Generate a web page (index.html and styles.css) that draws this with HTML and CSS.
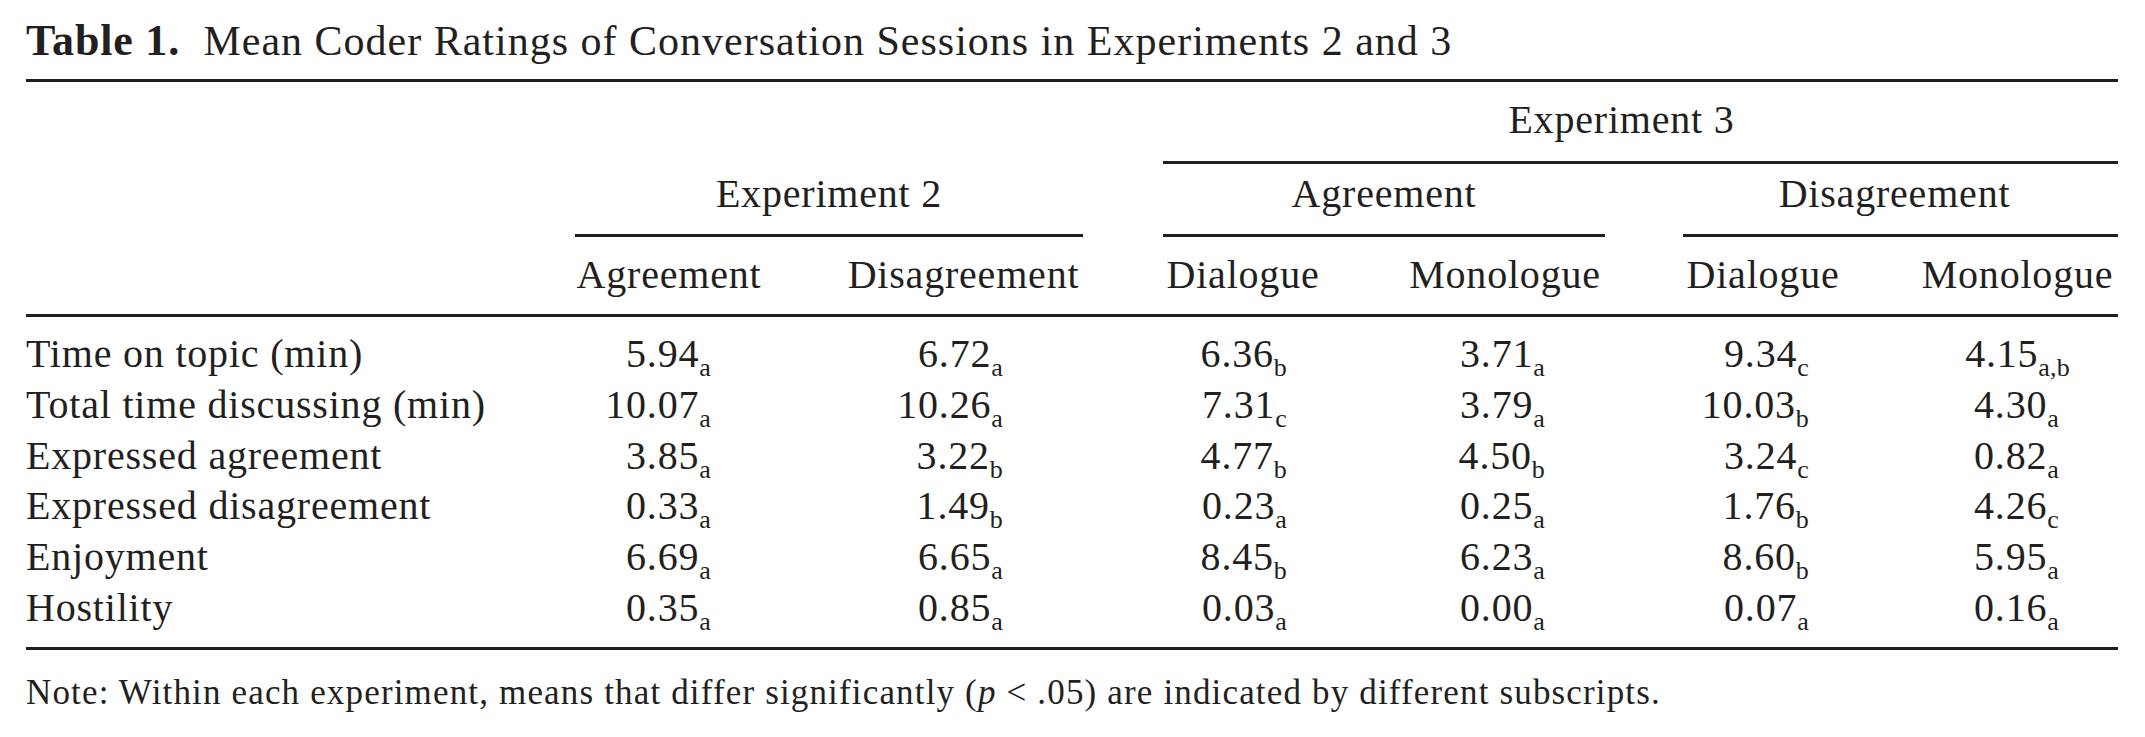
FILE: index.html
```html
<!DOCTYPE html>
<html lang="en">
<head>
<meta charset="utf-8">
<title>Table 1. Mean Coder Ratings of Conversation Sessions</title>
<link rel="stylesheet" href="styles.css">
</head>
<body>
<main class="page">
  <h1 class="caption"><b>Table 1.</b> Mean Coder Ratings of Conversation Sessions in Experiments 2 and 3</h1>
  <div class="table">
    <div class="thead">
      <div class="tr head-a">
        <div class="span-exp3">Experiment 3</div>
      </div>
      <div class="tr head-b">
        <div class="group g-exp2">Experiment 2</div>
        <div class="group g-agr">Agreement</div>
        <div class="group g-dis">Disagreement</div>
      </div>
      <div class="tr head-c">
        <div class="colhead c1">Agreement</div>
        <div class="colhead c2">Disagreement</div>
        <div class="colhead c3">Dialogue</div>
        <div class="colhead c4">Monologue</div>
        <div class="colhead c5">Dialogue</div>
        <div class="colhead c6">Monologue</div>
      </div>
    </div>
    <div class="tbody">
      <div class="tr row">
        <div class="lab">Time on topic (min)</div>
        <div class="val c1">5.94<sub>a</sub></div>
        <div class="val c2">6.72<sub>a</sub></div>
        <div class="val c3">6.36<sub>b</sub></div>
        <div class="val c4">3.71<sub>a</sub></div>
        <div class="val c5">9.34<sub>c</sub></div>
        <div class="val c6 wide">4.15<sub>a,b</sub></div>
      </div>
      <div class="tr row">
        <div class="lab">Total time discussing (min)</div>
        <div class="val c1">10.07<sub>a</sub></div>
        <div class="val c2">10.26<sub>a</sub></div>
        <div class="val c3">7.31<sub>c</sub></div>
        <div class="val c4">3.79<sub>a</sub></div>
        <div class="val c5">10.03<sub>b</sub></div>
        <div class="val c6">4.30<sub>a</sub></div>
      </div>
      <div class="tr row">
        <div class="lab">Expressed agreement</div>
        <div class="val c1">3.85<sub>a</sub></div>
        <div class="val c2">3.22<sub>b</sub></div>
        <div class="val c3">4.77<sub>b</sub></div>
        <div class="val c4">4.50<sub>b</sub></div>
        <div class="val c5">3.24<sub>c</sub></div>
        <div class="val c6">0.82<sub>a</sub></div>
      </div>
      <div class="tr row">
        <div class="lab">Expressed disagreement</div>
        <div class="val c1">0.33<sub>a</sub></div>
        <div class="val c2">1.49<sub>b</sub></div>
        <div class="val c3">0.23<sub>a</sub></div>
        <div class="val c4">0.25<sub>a</sub></div>
        <div class="val c5">1.76<sub>b</sub></div>
        <div class="val c6">4.26<sub>c</sub></div>
      </div>
      <div class="tr row">
        <div class="lab">Enjoyment</div>
        <div class="val c1">6.69<sub>a</sub></div>
        <div class="val c2">6.65<sub>a</sub></div>
        <div class="val c3">8.45<sub>b</sub></div>
        <div class="val c4">6.23<sub>a</sub></div>
        <div class="val c5">8.60<sub>b</sub></div>
        <div class="val c6">5.95<sub>a</sub></div>
      </div>
      <div class="tr row">
        <div class="lab">Hostility</div>
        <div class="val c1">0.35<sub>a</sub></div>
        <div class="val c2">0.85<sub>a</sub></div>
        <div class="val c3">0.03<sub>a</sub></div>
        <div class="val c4">0.00<sub>a</sub></div>
        <div class="val c5">0.07<sub>a</sub></div>
        <div class="val c6">0.16<sub>a</sub></div>
      </div>
    </div>
  </div>
  <p class="note">Note: Within each experiment, means that differ significantly (<i>p</i> &lt; .05) are indicated by different subscripts.</p>
</main>
</body>
</html>
```
FILE: styles.css
```css
* { box-sizing: border-box; }
html, body { margin: 0; padding: 0; background: #ffffff; }
body {
  font-family: "Liberation Serif", "Times New Roman", serif;
  color: #231f20;
}
.page {
  width: 2145px;
  padding: 16px 27px 0 26px;
}
.caption {
  margin: 0;
  font-size: 42px;
  line-height: 50px;
  font-weight: normal;
  letter-spacing: 1px;
  white-space: nowrap;
}
.caption b { font-size: 44px; font-weight: bold; margin-right: 12px; letter-spacing: 0.8px; }

.table {
  margin-top: 13px;
  width: 2092px;
  border-top: 3px solid #231f20;
  font-size: 40px;
  letter-spacing: 0.8px;
}
.tr {
  display: grid;
  grid-template-columns: 549px 188px 81px 239px 80px 160px 82px 200px 78px 160px 74px 201px;
}

/* header rows */
.span-exp3 {
  grid-column: 6 / 13;
  text-align: center;
  line-height: 48px;
  padding: 14px 38px 17px 0;
  border-bottom: 3px solid #231f20;
}
.group {
  text-align: center;
  line-height: 48px;
  padding: 6px 0 16px;
  border-bottom: 3px solid #231f20;
}
.g-exp2 { grid-column: 2 / 5; }
.g-agr { grid-column: 6 / 9; }
.g-dis { grid-column: 10 / 13; padding-right: 12px; }

.head-c { border-bottom: 3px solid #231f20; }
.colhead {
  text-align: center;
  line-height: 48px;
  padding: 14px 0 15px;
  white-space: nowrap;
}

.c1 { grid-column: 2; }
.c2 { grid-column: 4; }
.c3 { grid-column: 6; }
.c4 { grid-column: 8; }
.c5 { grid-column: 10; }
.c6 { grid-column: 12; }

/* body */
.tbody {
  padding: 12px 0 13px;
  border-bottom: 3px solid #231f20;
}
.row { line-height: 50.8px; }
.lab { grid-column: 1; white-space: nowrap; }
.val { text-align: right; white-space: nowrap; }
.val.c1 { padding-right: 52px; }
.val.c2 { padding-right: 80px; }
.val.c3 { padding-right: 36px; }
.val.c4 { padding-right: 60px; }
.val.c5 { padding-right: 34px; }
.val.c6 { padding-right: 59px; }
.val.c6.wide { padding-right: 48px; }

sub {
  font-size: 26px;
  line-height: 0;
  vertical-align: -9px;
  letter-spacing: 0.2px;
}

.note {
  margin: 21px 0 0;
  font-size: 35px;
  line-height: 44px;
  letter-spacing: 1.16px;
  white-space: nowrap;
}
.note i { font-style: italic; }
```
